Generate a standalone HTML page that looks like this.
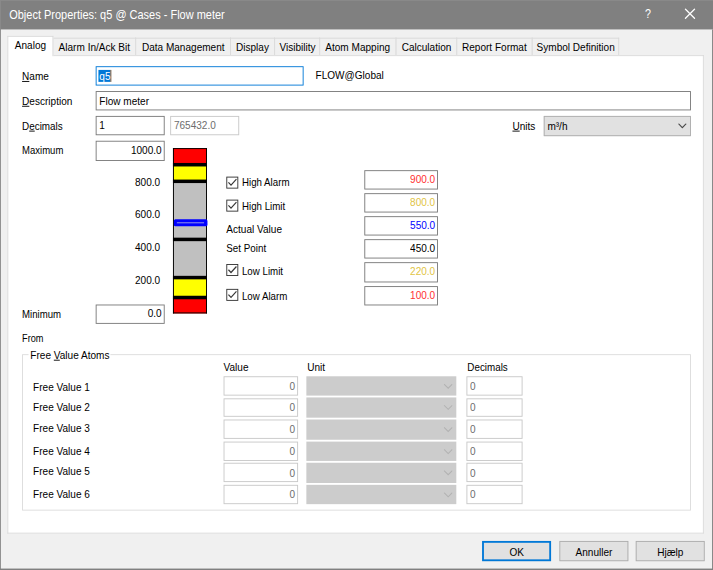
<!DOCTYPE html>
<html>
<head>
<meta charset="utf-8">
<title>Object Properties</title>
<style>
html,body{margin:0;padding:0;}
body{width:713px;height:570px;overflow:hidden;background:#f0f0f0;position:relative;}
#win{position:absolute;left:0;top:0;width:775.00px;height:619.57px;background:#f0f0f0;overflow:hidden;transform:scale(0.92);transform-origin:0 0;font-family:"Liberation Sans",sans-serif;font-size:12px;color:#000;}
#win div,#win span{box-sizing:border-box;}
.abs{position:absolute;}
#title{position:absolute;left:0;top:0;width:100%;height:31.96px;background:#808080;color:#fff;}
#title .tt{position:absolute;left:9.78px;top:8.91px;font-size:13px;line-height:16px;white-space:nowrap;transform:scaleX(0.918);transform-origin:0 50%;}
#title .q{position:absolute;left:701.09px;top:7.61px;font-size:13px;line-height:16px;transform:scaleX(.9);transform-origin:0 50%;}
.edge{position:absolute;background:#808080;}
#page{position:absolute;background:#fff;border:1px solid #d9d9d9;border-top:none;}
.tab{position:absolute;border:1px solid #d9d9d9;border-bottom:none;background:#f0f0f0;white-space:nowrap;}
.tab.sel{background:#fff;z-index:2;}
.lbl{position:absolute;white-space:nowrap;line-height:14px;height:14px;transform:scaleX(0.91);transform-origin:0 50%;}
.bt{position:absolute;white-space:nowrap;line-height:14px;height:14px;transform:scaleX(0.91);transform-origin:0 50%;}
.inp{position:absolute;border:1px solid #7a7a7a;background:#fff;}
.inp.dis{border-color:#c8c8c8;color:#6d6d6d;}
.cb{position:absolute;width:13px;height:13px;border:1px solid #333;background:#fff;}
.cb svg{position:absolute;left:-1px;top:-1px;width:13px;height:13px;}
.combo{position:absolute;}
.btn{position:absolute;border:1px solid #adadad;background:#e1e1e1;}
u{text-decoration:underline;}
</style>
</head>
<body>
<div id="win">
  <div id="title">
    <div class="tt">Object Properties: q5 @ Cases - Flow meter</div>
    <div class="q">?</div>
    <svg class="abs" style="left:744.02px;top:9.24px;width:11.96px;height:11.96px" viewBox="0 0 11 11"><path d="M0.5 0.5 L10.5 10.5 M10.5 0.5 L0.5 10.5" stroke="#fff" stroke-width="1.25" fill="none"/></svg>
  </div>

<div class="tab sel" style="left:7.50px;top:38.70px;width:50.22px;height:21.85px;"><span class="bt" style="top:2.17px;left:0;right:0;text-align:center;transform-origin:50% 50%;">Analog</span></div>
<div class="tab" style="left:56.63px;top:40.98px;width:91.09px;height:19.13px;"><span class="bt" style="top:1.96px;left:0;right:0;text-align:center;transform-origin:50% 50%;">Alarm In/Ack Bit</span></div>
<div class="tab" style="left:146.63px;top:40.98px;width:104.35px;height:19.13px;"><span class="bt" style="top:1.96px;left:0;right:0;text-align:center;transform-origin:50% 50%;">Data Management</span></div>
<div class="tab" style="left:249.89px;top:40.98px;width:48.80px;height:19.13px;"><span class="bt" style="top:1.96px;left:0;right:0;text-align:center;transform-origin:50% 50%;">Display</span></div>
<div class="tab" style="left:297.61px;top:40.98px;width:50.87px;height:19.13px;"><span class="bt" style="top:1.96px;left:0;right:0;text-align:center;transform-origin:50% 50%;">Visibility</span></div>
<div class="tab" style="left:347.39px;top:40.98px;width:83.59px;height:19.13px;"><span class="bt" style="top:1.96px;left:0;right:0;text-align:center;transform-origin:50% 50%;">Atom Mapping</span></div>
<div class="tab" style="left:429.89px;top:40.98px;width:67.28px;height:19.13px;"><span class="bt" style="top:1.96px;left:0;right:0;text-align:center;transform-origin:50% 50%;">Calculation</span></div>
<div class="tab" style="left:496.09px;top:40.98px;width:82.72px;height:19.13px;"><span class="bt" style="top:1.96px;left:0;right:0;text-align:center;transform-origin:50% 50%;">Report Format</span></div>
<div class="tab" style="left:577.72px;top:40.98px;width:95.33px;height:19.13px;"><span class="bt" style="top:1.96px;left:0;right:0;text-align:center;transform-origin:50% 50%;">Symbol Definition</span></div>
<div id="page" style="left:7.50px;top:59.57px;width:757.61px;height:520.11px;"></div>
<div class="abs" style="left:56.63px;top:59.57px;width:708.48px;height:1.00px;background:#d9d9d9;"></div>
<div class="lbl" style="top:75.54px;left:23.91px;"><u>N</u>ame</div>
<div class="inp" style="left:103.91px;top:72.07px;width:225.65px;height:20.76px;border-color:#0078d7;"><div class="abs" style="left:2.39px;top:2.61px;width:12.61px;height:13.37px;background:#0078d7;"></div><div class="abs" style="left:15.00px;top:2.61px;width:0.98px;height:13.37px;background:#6b4a2a;"></div><span class="bt" style="left:2.72px;top:2.83px;color:#fff;">q5</span></div>
<div class="lbl" style="top:74.89px;left:343.15px;">FLOW@Global</div>
<div class="lbl" style="top:102.50px;left:23.91px;"><u>D</u>escription</div>
<div class="inp" style="left:103.91px;top:99.13px;width:647.17px;height:20.87px;"><span class="bt" style="top:2.83px;left:3.26px;">Flow meter</span></div>
<div class="lbl" style="top:129.57px;left:23.91px;transform:scaleX(0.895);">D<u>e</u>cimals</div>
<div class="inp" style="left:103.91px;top:126.09px;width:75.22px;height:20.87px;"><span class="bt" style="top:2.28px;left:3.26px;">1</span></div>
<div class="inp dis" style="left:185.00px;top:126.09px;width:74.57px;height:20.87px;"><span class="bt" style="top:2.28px;left:3.26px;">765432.0</span></div>
<div class="lbl" style="top:129.57px;left:556.63px;"><u>U</u>nits</div>
<div class="combo" style="left:590.98px;top:125.87px;width:160.11px;height:21.96px;border:1px solid #adadad;background:#e1e1e1;"><span class="bt" style="top:3.48px;left:3.26px;">m³/h</span><svg class="abs" style="left:145.33px;top:7.39px;width:9.35px;height:5.65px" viewBox="0 0 10 6"><path d="M0.5 0.5 L5 5 L9.5 0.5" stroke="#4a4a4a" stroke-width="1.3" fill="none"/></svg></div>
<div class="lbl" style="top:155.65px;left:23.91px;transform:scaleX(0.862);">Maximum</div>
<div class="inp" style="left:103.91px;top:152.61px;width:74.89px;height:22.39px;"><span class="bt" style="top:2.17px;right:1.96px;transform-origin:100% 50%;">1000.0</span></div>
<div class="lbl" style="top:190.54px;right:600.98px;transform-origin:100% 50%;">800.0</div>
<div class="lbl" style="top:226.30px;right:600.98px;transform-origin:100% 50%;">600.0</div>
<div class="lbl" style="top:261.96px;right:600.98px;transform-origin:100% 50%;">400.0</div>
<div class="lbl" style="top:297.50px;right:600.98px;transform-origin:100% 50%;">200.0</div>
<svg class="abs" style="left:188.04px;top:160.87px;width:36.96px;height:179.67px" viewBox="0 0 34.00 165.30" preserveAspectRatio="none" overflow="visible"><rect x="0.00" y="0.00" width="34.00" height="165.30" fill="#c0c0c0"/><rect x="0.00" y="0.00" width="34.00" height="16.60" fill="#ff0000"/><rect x="0.00" y="16.60" width="34.00" height="16.60" fill="#ffff00"/><rect x="0.00" y="129.48" width="34.00" height="19.92" fill="#ffff00"/><rect x="0.00" y="149.40" width="34.00" height="15.90" fill="#ff0000"/><rect x="0.00" y="14.85" width="34.00" height="3.50" fill="#000"/><rect x="0.00" y="31.45" width="34.00" height="3.50" fill="#000"/><rect x="0.00" y="89.55" width="34.00" height="3.50" fill="#000"/><rect x="0.00" y="127.73" width="34.00" height="3.50" fill="#000"/><rect x="0.00" y="147.65" width="34.00" height="3.50" fill="#000"/><rect x="0.00" y="0.00" width="0.95" height="165.30" fill="#000"/><rect x="33.05" y="0.00" width="0.95" height="165.30" fill="#000"/><rect x="0.00" y="0.00" width="34.00" height="0.95" fill="#000"/><rect x="0.00" y="164.35" width="34.00" height="0.95" fill="#000"/><rect x="0.9" y="71.25" width="33.60" height="6.9" rx="1.6" ry="1.6" fill="#0000ff"/><rect x="3.90" y="74.25" width="27.20" height="0.90" fill="#a4a4e4"/></svg>
<div class="cb" style="left:245.87px;top:191.52px;"><svg viewBox="0 0 13 13"><path d="M2.3 6.2 L5.1 9.2 L11 2.7" stroke="#383838" stroke-width="1.3" fill="none"/></svg></div>
<div class="lbl" style="top:190.87px;left:263.04px;transform:scaleX(0.88);">High Alarm</div>
<div class="cb" style="left:245.87px;top:216.74px;"><svg viewBox="0 0 13 13"><path d="M2.3 6.2 L5.1 9.2 L11 2.7" stroke="#383838" stroke-width="1.3" fill="none"/></svg></div>
<div class="lbl" style="top:217.17px;left:263.04px;transform:scaleX(0.88);">High Limit</div>
<div class="lbl" style="top:242.39px;left:245.87px;">Actual Value</div>
<div class="lbl" style="top:263.26px;left:245.87px;transform:scaleX(0.89);">Set Point</div>
<div class="cb" style="left:245.87px;top:287.28px;"><svg viewBox="0 0 13 13"><path d="M2.3 6.2 L5.1 9.2 L11 2.7" stroke="#383838" stroke-width="1.3" fill="none"/></svg></div>
<div class="lbl" style="top:287.61px;left:263.04px;transform:scaleX(0.88);">Low Limit</div>
<div class="cb" style="left:245.87px;top:314.24px;"><svg viewBox="0 0 13 13"><path d="M2.3 6.2 L5.1 9.2 L11 2.7" stroke="#383838" stroke-width="1.3" fill="none"/></svg></div>
<div class="lbl" style="top:314.57px;left:263.04px;transform:scaleX(0.88);">Low Alarm</div>
<div class="inp" style="left:395.65px;top:184.57px;width:80.43px;height:21.30px;"><span class="bt" style="top:2.17px;right:1.96px;transform-origin:100% 50%;color:#ff3030;">900.0</span></div>
<div class="inp" style="left:395.65px;top:209.89px;width:80.43px;height:21.30px;"><span class="bt" style="top:2.17px;right:1.96px;transform-origin:100% 50%;color:#dfc444;">800.0</span></div>
<div class="inp" style="left:395.65px;top:234.89px;width:80.43px;height:21.30px;"><span class="bt" style="top:2.17px;right:1.96px;transform-origin:100% 50%;color:#0000ff;">550.0</span></div>
<div class="inp" style="left:395.65px;top:260.11px;width:80.43px;height:21.30px;"><span class="bt" style="top:2.17px;right:1.96px;transform-origin:100% 50%;color:#000;">450.0</span></div>
<div class="inp" style="left:395.65px;top:285.22px;width:80.43px;height:21.30px;"><span class="bt" style="top:2.17px;right:1.96px;transform-origin:100% 50%;color:#dfc444;">220.0</span></div>
<div class="inp" style="left:395.65px;top:310.76px;width:80.43px;height:21.30px;"><span class="bt" style="top:2.17px;right:1.96px;transform-origin:100% 50%;color:#ff3030;">100.0</span></div>
<div class="lbl" style="top:334.78px;left:23.91px;transform:scaleX(0.87);">Minimum</div>
<div class="inp" style="left:103.91px;top:330.65px;width:75.22px;height:20.98px;"><span class="bt" style="top:1.96px;right:1.96px;transform-origin:100% 50%;">0.0</span></div>
<div class="lbl" style="top:360.87px;left:23.91px;transform:scaleX(0.83);">From</div>
<div class="abs" style="left:24.13px;top:385.22px;width:726.96px;height:170.11px;border:1px solid #dcdcdc;"></div>
<div class="abs" style="left:30.76px;top:380.43px;width:89.46px;height:10.87px;background:#fff;"></div>
<div class="lbl" style="top:378.80px;left:32.93px;">Free <u>V</u>alue Atoms</div>
<div class="lbl" style="top:391.96px;left:242.83px;">Value</div>
<div class="lbl" style="top:391.96px;left:333.91px;">Unit</div>
<div class="lbl" style="top:391.96px;left:507.61px;transform:scaleX(0.89);">Decimals</div>
<div class="lbl" style="top:413.59px;left:36.20px;">Free Value 1</div>
<div class="inp dis" style="left:242.72px;top:408.91px;width:80.98px;height:20.98px;"><span class="bt" style="top:2.61px;right:1.96px;transform-origin:100% 50%;">0</span></div>
<div class="combo" style="left:332.93px;top:408.70px;width:163.37px;height:21.52px;background:#cccccc;"><svg class="abs" style="left:148.91px;top:8.04px;width:10.33px;height:5.98px" viewBox="0 0 10 6"><path d="M0.5 0.5 L5 5 L9.5 0.5" stroke="#b2b2b2" stroke-width="1.1" fill="none"/></svg></div>
<div class="inp dis" style="left:506.63px;top:408.91px;width:61.74px;height:20.98px;"><span class="bt" style="top:2.61px;left:3.26px;">0</span></div>
<div class="lbl" style="top:435.65px;left:36.20px;">Free Value 2</div>
<div class="inp dis" style="left:242.72px;top:432.50px;width:80.98px;height:20.98px;"><span class="bt" style="top:2.61px;right:1.96px;transform-origin:100% 50%;">0</span></div>
<div class="combo" style="left:332.93px;top:432.28px;width:163.37px;height:21.52px;background:#cccccc;"><svg class="abs" style="left:148.91px;top:8.04px;width:10.33px;height:5.98px" viewBox="0 0 10 6"><path d="M0.5 0.5 L5 5 L9.5 0.5" stroke="#b2b2b2" stroke-width="1.1" fill="none"/></svg></div>
<div class="inp dis" style="left:506.63px;top:432.50px;width:61.74px;height:20.98px;"><span class="bt" style="top:2.61px;left:3.26px;">0</span></div>
<div class="lbl" style="top:459.35px;left:36.20px;">Free Value 3</div>
<div class="inp dis" style="left:242.72px;top:456.41px;width:80.98px;height:20.98px;"><span class="bt" style="top:2.61px;right:1.96px;transform-origin:100% 50%;">0</span></div>
<div class="combo" style="left:332.93px;top:456.20px;width:163.37px;height:21.52px;background:#cccccc;"><svg class="abs" style="left:148.91px;top:8.04px;width:10.33px;height:5.98px" viewBox="0 0 10 6"><path d="M0.5 0.5 L5 5 L9.5 0.5" stroke="#b2b2b2" stroke-width="1.1" fill="none"/></svg></div>
<div class="inp dis" style="left:506.63px;top:456.41px;width:61.74px;height:20.98px;"><span class="bt" style="top:2.61px;left:3.26px;">0</span></div>
<div class="lbl" style="top:484.02px;left:36.20px;">Free Value 4</div>
<div class="inp dis" style="left:242.72px;top:480.11px;width:80.98px;height:20.98px;"><span class="bt" style="top:2.61px;right:1.96px;transform-origin:100% 50%;">0</span></div>
<div class="combo" style="left:332.93px;top:479.89px;width:163.37px;height:21.52px;background:#cccccc;"><svg class="abs" style="left:148.91px;top:8.04px;width:10.33px;height:5.98px" viewBox="0 0 10 6"><path d="M0.5 0.5 L5 5 L9.5 0.5" stroke="#b2b2b2" stroke-width="1.1" fill="none"/></svg></div>
<div class="inp dis" style="left:506.63px;top:480.11px;width:61.74px;height:20.98px;"><span class="bt" style="top:2.61px;left:3.26px;">0</span></div>
<div class="lbl" style="top:504.78px;left:36.20px;">Free Value 5</div>
<div class="inp dis" style="left:242.72px;top:503.26px;width:80.98px;height:20.98px;"><span class="bt" style="top:2.61px;right:1.96px;transform-origin:100% 50%;">0</span></div>
<div class="combo" style="left:332.93px;top:503.04px;width:163.37px;height:21.52px;background:#cccccc;"><svg class="abs" style="left:148.91px;top:8.04px;width:10.33px;height:5.98px" viewBox="0 0 10 6"><path d="M0.5 0.5 L5 5 L9.5 0.5" stroke="#b2b2b2" stroke-width="1.1" fill="none"/></svg></div>
<div class="inp dis" style="left:506.63px;top:503.26px;width:61.74px;height:20.98px;"><span class="bt" style="top:2.61px;left:3.26px;">0</span></div>
<div class="lbl" style="top:529.57px;left:36.20px;">Free Value 6</div>
<div class="inp dis" style="left:242.72px;top:526.74px;width:80.98px;height:20.98px;"><span class="bt" style="top:2.61px;right:1.96px;transform-origin:100% 50%;">0</span></div>
<div class="combo" style="left:332.93px;top:526.52px;width:163.37px;height:21.52px;background:#cccccc;"><svg class="abs" style="left:148.91px;top:8.04px;width:10.33px;height:5.98px" viewBox="0 0 10 6"><path d="M0.5 0.5 L5 5 L9.5 0.5" stroke="#b2b2b2" stroke-width="1.1" fill="none"/></svg></div>
<div class="inp dis" style="left:506.63px;top:526.74px;width:61.74px;height:20.98px;"><span class="bt" style="top:2.61px;left:3.26px;">0</span></div>
<div class="btn" style="left:523.91px;top:588.26px;width:75.22px;height:21.52px;border:2px solid #0078d7;"><span class="bt" style="top:2.26px;left:0;right:0;text-align:center;transform-origin:50% 50%;">OK</span></div>
<div class="btn" style="left:607.61px;top:588.26px;width:75.22px;height:21.52px;"><span class="bt" style="top:3.26px;left:0;right:0;text-align:center;transform-origin:50% 50%;">Annuller</span></div>
<div class="btn" style="left:691.20px;top:588.26px;width:75.22px;height:21.52px;"><span class="bt" style="top:3.26px;left:0;right:0;text-align:center;transform-origin:50% 50%;">Hjælp</span></div>
<div class="edge" style="left:0;top:0;width:1px;bottom:0;background:#8a8a8a;"></div>
<div class="edge" style="left:0;top:0;right:0;height:1px;background:#8a8a8a;"></div>
<div class="edge" style="right:0;top:31.96px;width:1px;bottom:0;"></div>
<div class="edge" style="left:0;right:0;bottom:0;height:1.30px;"></div>
</div>
</body>
</html>
